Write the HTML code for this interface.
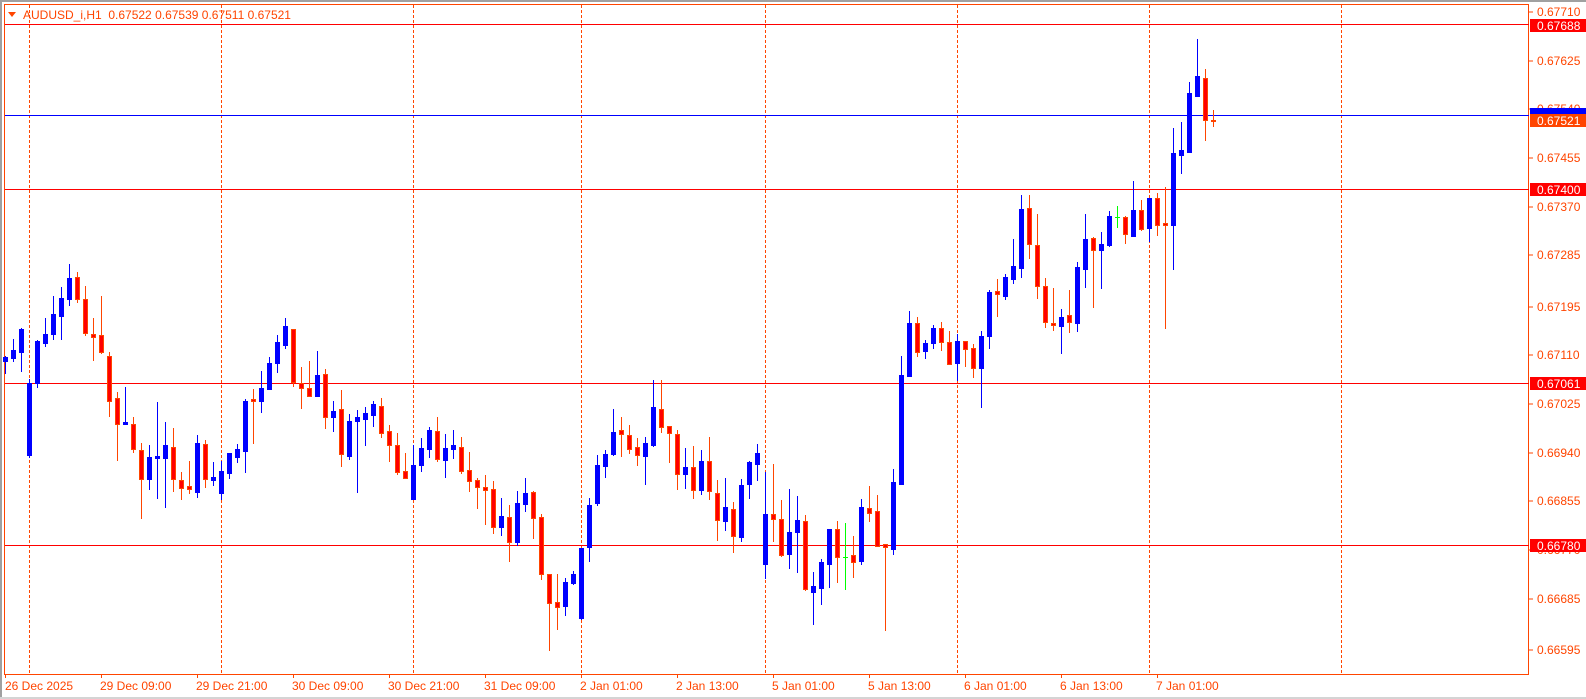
<!DOCTYPE html>
<html><head><meta charset="utf-8">
<style>
html,body{margin:0;padding:0;background:#fff;width:1586px;height:699px;overflow:hidden}
svg{display:block;font-family:"Liberation Sans",sans-serif}
</style></head>
<body>
<svg id="c" width="1586" height="699" xmlns="http://www.w3.org/2000/svg">
<rect x="0" y="0" width="1586" height="699" fill="#fff"/>
<rect x="0" y="0" width="1586" height="2" fill="#a0a0a0"/>
<rect x="0" y="0" width="2" height="699" fill="#a0a0a0"/>
<rect x="0" y="697" width="1586" height="2" fill="#d4d4d4"/>
<rect x="4.5" y="4.5" width="1524" height="670" fill="none" stroke="#FF4500"/>
<g stroke="#FF4500" stroke-dasharray="3,2">
<line x1="29.5" y1="5" x2="29.5" y2="674"/>
<line x1="221.5" y1="5" x2="221.5" y2="674"/>
<line x1="413.5" y1="5" x2="413.5" y2="674"/>
<line x1="581.5" y1="5" x2="581.5" y2="674"/>
<line x1="765.5" y1="5" x2="765.5" y2="674"/>
<line x1="957.5" y1="5" x2="957.5" y2="674"/>
<line x1="1149.5" y1="5" x2="1149.5" y2="674"/>
<line x1="1341.5" y1="5" x2="1341.5" y2="674"/>
</g>
<g stroke="#FF0000">
<line x1="5" y1="24.5" x2="1529" y2="24.5"/>
<line x1="5" y1="189.5" x2="1529" y2="189.5"/>
<line x1="5" y1="383.5" x2="1529" y2="383.5"/>
<line x1="5" y1="545.5" x2="1529" y2="545.5"/>
</g>
<line x1="5" y1="115.5" x2="1529" y2="115.5" stroke="#0000FF"/>
<g id="candles"></g>
<polygon points="8,12 16,12 12,17" fill="#FF4500"/>
<text x="23" y="19" font-size="12" fill="#FF4500" xml:space="preserve">AUDUSD_i,H1  0.67522 0.67539 0.67511 0.67521</text>
<g stroke="#FF4500">
<line x1="1529" y1="12" x2="1533" y2="12"/><line x1="1529" y1="61" x2="1533" y2="61"/>
<line x1="1529" y1="109" x2="1533" y2="109"/><line x1="1529" y1="158" x2="1533" y2="158"/>
<line x1="1529" y1="207" x2="1533" y2="207"/><line x1="1529" y1="255" x2="1533" y2="255"/>
<line x1="1529" y1="307" x2="1533" y2="307"/><line x1="1529" y1="355" x2="1533" y2="355"/>
<line x1="1529" y1="404" x2="1533" y2="404"/><line x1="1529" y1="453" x2="1533" y2="453"/>
<line x1="1529" y1="501" x2="1533" y2="501"/><line x1="1529" y1="550" x2="1533" y2="550"/>
<line x1="1529" y1="599" x2="1533" y2="599"/><line x1="1529" y1="650" x2="1533" y2="650"/>
</g>
<g font-size="12" fill="#FF4500">
<text x="1537" y="16">0.67710</text><text x="1537" y="65">0.67625</text>
<text x="1537" y="113">0.67540</text><text x="1537" y="162">0.67455</text>
<text x="1537" y="211">0.67370</text><text x="1537" y="259">0.67285</text>
<text x="1537" y="311">0.67195</text><text x="1537" y="359">0.67110</text>
<text x="1537" y="408">0.67025</text><text x="1537" y="457">0.66940</text>
<text x="1537" y="505">0.66855</text><text x="1537" y="554">0.66770</text>
<text x="1537" y="603">0.66685</text><text x="1537" y="654">0.66595</text>
</g>
<rect x="1530" y="19" width="56" height="13" fill="#FF0000"/>
<rect x="1530" y="108" width="56" height="6" fill="#0000FF"/>
<rect x="1530" y="114" width="56" height="13" fill="#FF4500"/>
<rect x="1530" y="183" width="56" height="13" fill="#FF0000"/>
<rect x="1530" y="377" width="56" height="13" fill="#FF0000"/>
<rect x="1530" y="539" width="56" height="13" fill="#FF0000"/>
<g font-size="12" fill="#fff">
<text x="1537" y="30">0.67688</text>
<text x="1537" y="125">0.67521</text>
<text x="1537" y="194">0.67400</text>
<text x="1537" y="388">0.67061</text>
<text x="1537" y="550">0.66780</text>
</g>
<g stroke="#FF4500">
<line x1="5.5" y1="674" x2="5.5" y2="678"/><line x1="101.5" y1="674" x2="101.5" y2="678"/>
<line x1="197.5" y1="674" x2="197.5" y2="678"/><line x1="293.5" y1="674" x2="293.5" y2="678"/>
<line x1="389.5" y1="674" x2="389.5" y2="678"/><line x1="485.5" y1="674" x2="485.5" y2="678"/>
<line x1="581.5" y1="674" x2="581.5" y2="678"/><line x1="677.5" y1="674" x2="677.5" y2="678"/>
<line x1="773.5" y1="674" x2="773.5" y2="678"/><line x1="869.5" y1="674" x2="869.5" y2="678"/>
<line x1="965.5" y1="674" x2="965.5" y2="678"/><line x1="1061.5" y1="674" x2="1061.5" y2="678"/>
<line x1="1157.5" y1="674" x2="1157.5" y2="678"/>
</g>
<g font-size="12" fill="#FF4500">
<text x="5" y="690">26 Dec 2025</text><text x="100" y="690">29 Dec 09:00</text>
<text x="196" y="690">29 Dec 21:00</text><text x="292" y="690">30 Dec 09:00</text>
<text x="388" y="690">30 Dec 21:00</text><text x="484" y="690">31 Dec 09:00</text>
<text x="580" y="690">2 Jan 01:00</text><text x="676" y="690">2 Jan 13:00</text>
<text x="772" y="690">5 Jan 01:00</text><text x="868" y="690">5 Jan 13:00</text>
<text x="964" y="690">6 Jan 01:00</text><text x="1060" y="690">6 Jan 13:00</text>
<text x="1156" y="690">7 Jan 01:00</text>
</g>
</svg>
<script>
var d="B 357 361 356 373|B 350 358 339 361|B 329 352 328 371|B 383 455 379 457|B 341 383 340 387|B 334 343 318 346|B 314 334 296 339|B 298 316 287 339|B 278 299 264 305|R 277 299 272 302|R 299 333 286 335|R 334 337 318 360|R 335 352 296 353|R 356 401 352 416|R 398 424 392 460|B 422 424 387 424|R 424 449 417 452|R 450 479 443 518|B 457 479 445 489|B 456 458 402 498|B 445 458 422 507|R 447 479 428 491|R 480 488 472 499|R 486 489 461 493|B 443 492 435 497|R 444 479 440 487|B 477 480 462 485|B 471 493 461 499|B 453 473 453 478|B 449 457 444 462|B 401 451 399 472|R 399 401 389 443|B 388 401 371 412|B 363 389 357 389|B 342 363 335 372|B 326 345 318 348|R 329 382 329 386|R 383 388 367 408|R 388 396 361 396|B 375 396 351 396|R 374 417 369 428|B 411 417 401 431|R 409 454 390 466|B 421 456 414 459|B 417 421 410 492|B 413 419 407 445|B 404 415 401 426|R 406 433 398 437|R 431 445 425 461|R 445 472 433 474|R 471 478 453 478|B 465 499 445 499|B 448 465 438 471|B 430 449 427 457|R 431 459 417 461|B 448 460 434 477|B 445 449 430 458|R 447 471 437 473|R 470 481 452 491|R 480 487 478 508|R 487 490 475 524|R 489 527 481 533|B 516 527 498 535|R 517 542 505 561|B 503 542 491 545|B 493 504 478 511|R 492 518 491 538|R 517 574 514 579|R 574 603 574 650|R 602 607 574 629|B 582 606 578 615|B 574 583 571 584|B 548 618 548 619|B 505 547 498 561|B 465 503 455 505|B 454 466 450 477|B 432 454 409 455|R 430 434 417 456|R 435 449 425 453|R 447 455 438 465|B 443 456 437 484|B 407 445 380 446|R 409 427 380 432|R 426 433 426 462|R 434 474 430 489|B 467 474 448 488|R 467 490 446 498|B 461 490 450 494|R 461 491 437 499|R 493 520 480 540|B 507 521 478 530|R 509 536 502 552|B 485 537 479 541|B 462 484 461 498|B 453 464 444 480|B 514 564 472 578|R 514 519 464 541|R 519 555 500 556|B 532 554 489 568|B 520 532 496 572|R 521 589 515 590|B 586 592 572 624|B 562 588 559 604|B 529 564 529 587|R 529 557 521 582|G 557 557 523 589|R 555 562 536 577|B 507 561 499 564|R 508 513 486 521|R 511 546 495 546|R 544 547 544 630|B 482 549 469 554|B 375 484 356 484|B 323 376 311 376|R 323 352 317 356|B 343 351 340 358|B 328 343 325 348|R 328 342 322 350|R 342 364 331 364|B 341 363 334 380|R 341 349 341 366|R 348 368 344 377|B 336 368 331 407|B 292 336 290 348|R 291 294 279 316|B 277 296 274 299|B 266 279 239 283|B 209 268 195 277|R 208 244 195 258|R 245 286 214 298|R 286 322 278 327|R 323 325 288 330|B 317 326 309 353|R 315 322 290 332|B 267 323 262 331|B 239 269 214 287|R 238 250 237 307|B 244 250 232 288|B 216 245 211 246|G 217 217 206 227|R 217 234 216 243|B 210 236 181 236|R 210 229 200 230|B 198 228 198 241|R 198 225 193 235|R 223 225 187 328|B 153 225 128 269|B 150 155 122 173|B 93 152 82 152|B 76 96 39 96|R 78 120 69 140|R 120 121 110 126".split("|");
var s="",NS="http://www.w3.org/2000/svg";
for(var i=0;i<d.length;i++){var p=d[i].split(" "),t=p[0],bt=+p[1],bb=+p[2],wt=+p[3],wb=+p[4],cx=5+8*i;
var col=t=="B"?"#0000FF":(t=="G"?"#00FF00":"#FF4500");
s+='<line x1="'+(cx+0.5)+'" y1="'+wt+'" x2="'+(cx+0.5)+'" y2="'+(wb+1)+'" stroke="'+col+'"/>';
if(t=="B"){s+='<rect x="'+(cx-2)+'" y="'+bt+'" width="5" height="'+Math.max(2,bb-bt+1)+'" fill="#0000FF"/>';}
else if(t=="G"){s+='<rect x="'+(cx-2)+'" y="'+bt+'" width="5" height="1" fill="#00FF00"/>';}
else{var h=Math.max(2,bb-bt+1);s+='<rect x="'+(cx-1.5)+'" y="'+(bt+0.5)+'" width="4" height="'+(h-1)+'" fill="#FF0000" stroke="#FF4500"/>';}}
var g=document.getElementById("candles");
var tmp=new DOMParser().parseFromString('<svg xmlns="'+NS+'">'+s+'</svg>',"image/svg+xml").documentElement;
while(tmp.firstChild){g.appendChild(document.importNode(tmp.firstChild,true));tmp.removeChild(tmp.firstChild);}
</script>
</body></html>
